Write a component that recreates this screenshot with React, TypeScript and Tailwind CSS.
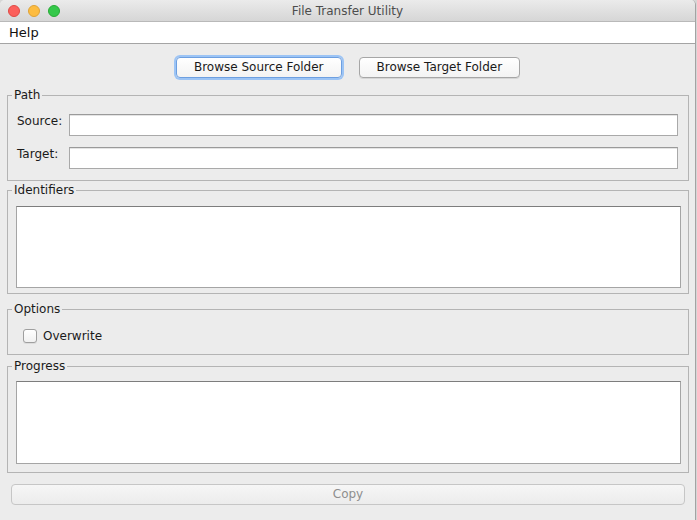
import React from "react";

const font = "font-['DejaVu_Sans','Liberation_Sans',sans-serif]";

function TrafficLights() {
  return (
    <div className="flex items-center gap-[8px] pl-[8px]">
      <span className="h-[12px] w-[12px] rounded-full bg-[#fc605c] border border-[#de4a45]" />
      <span className="h-[12px] w-[12px] rounded-full bg-[#fdbc40] border border-[#dea236]" />
      <span className="h-[12px] w-[12px] rounded-full bg-[#34c84a] border border-[#27aa35]" />
    </div>
  );
}

function Group({
  title,
  className,
  inner,
  children,
}: {
  title: string;
  className?: string;
  inner: string;
  children: React.ReactNode;
}) {
  return (
    <fieldset className={`border border-[#b4b4b4] ${className ?? ""}`}>
      <legend className="ml-[4px] px-[2px] text-[12px] leading-[16px] text-[#1a1a1a]">{title}</legend>
      <div className={inner}>{children}</div>
    </fieldset>
  );
}

function TextField() {
  return (
    <div className="flex-1 h-[22px] bg-white border border-[#a9a9a9] border-t-[#9a9a9a] shadow-[inset_0_1px_0_#e4e4e4]" />
  );
}

function TextArea({ h }: { h: string }) {
  return <div className={`${h} bg-white border border-[#a5a5a5] border-t-[#7d7d7d]`} />;
}

function AquaButton({ label, focused }: { label: string; focused?: boolean }) {
  return (
    <button
      className={`h-[21px] px-[17px] rounded-[4px] text-[12px] leading-[19px] text-[#1a1a1a] bg-gradient-to-b from-white to-[#f3f3f3] border ${
        focused
          ? "border-[#6d9fe0] shadow-[0_0_0_2px_#9cc4f5]"
          : "border-[#a6a6a6] shadow-[0_1px_0_#d6d6d6]"
      }`}
    >
      {label}
    </button>
  );
}

export default function App() {
  return (
    <div className={`w-[697px] h-[520px] flex bg-[#d6d6d6] ${font}`}>
      <div className="w-[696px] h-full flex flex-col bg-[#ececec] border-r border-[#a3a3a3] rounded-t-[5px] overflow-hidden">
        {/* title bar */}
        <div className="h-[22px] shrink-0 grid grid-cols-[1fr_auto_1fr] items-center bg-gradient-to-b from-[#ebebeb] to-[#d6d6d6] border-b border-[#b9b9b9]">
          <TrafficLights />
          <div className="text-[12px] leading-[16px] text-[#4d4d4d]">File Transfer Utility</div>
          <div />
        </div>

        {/* menu bar */}
        <div className="h-[22px] shrink-0 flex items-center bg-white border-b border-[#a4a4a4] pl-[9px]">
          <span className="text-[13px] leading-[16px] text-[#111]">Help</span>
        </div>

        {/* content */}
        <div className="flex-1 flex flex-col pl-[7px] pr-[6px]">
          <div className="mt-[13px] flex justify-center gap-[17px]">
            <AquaButton label="Browse Source Folder" focused />
            <AquaButton label="Browse Target Folder" />
          </div>

          <Group title="Path" className="mt-[9px]" inner="pl-[9px] pr-[10px] pt-[11px] pb-[11px]">
            <div className="flex flex-col gap-[11px]">
              <div className="flex items-center">
                <span className="w-[52px] text-[12px] leading-[16px] text-[#1a1a1a] -mt-[9px]">Source:</span>
                <TextField />
              </div>
              <div className="flex items-center">
                <span className="w-[52px] text-[12px] leading-[16px] text-[#1a1a1a] -mt-[9px]">Target:</span>
                <TextField />
              </div>
            </div>
          </Group>

          <Group title="Identifiers" className="mt-[1px]" inner="pl-[8px] pr-[7px] pt-[8px] pb-[5px]">
            <TextArea h="h-[82px]" />
          </Group>

          <Group title="Options" className="mt-[7px]" inner="pl-[15px] pt-[12px] pb-[11px]">
            <label className="flex items-center gap-[6px]">
              <span className="h-[14px] w-[14px] rounded-[3px] border border-[#9f9f9f] bg-gradient-to-b from-white to-[#f1f1f1] shadow-[0_1px_0_#dcdcdc]" />
              <span className="text-[12px] leading-[14px] text-[#1a1a1a]">Overwrite</span>
            </label>
          </Group>

          <Group title="Progress" className="mt-[3px]" inner="pl-[8px] pr-[7px] pt-[7px] pb-[8px]">
            <TextArea h="h-[83px]" />
          </Group>

          <button
            disabled
            className="mt-[11px] mx-[4px] h-[21px] rounded-[4px] border border-[#c6c6c6] bg-gradient-to-b from-[#f6f6f6] to-[#ececec] text-[12px] leading-[19px] text-[#8e8e8e]"
          >
            Copy
          </button>
        </div>
      </div>
    </div>
  );
}
